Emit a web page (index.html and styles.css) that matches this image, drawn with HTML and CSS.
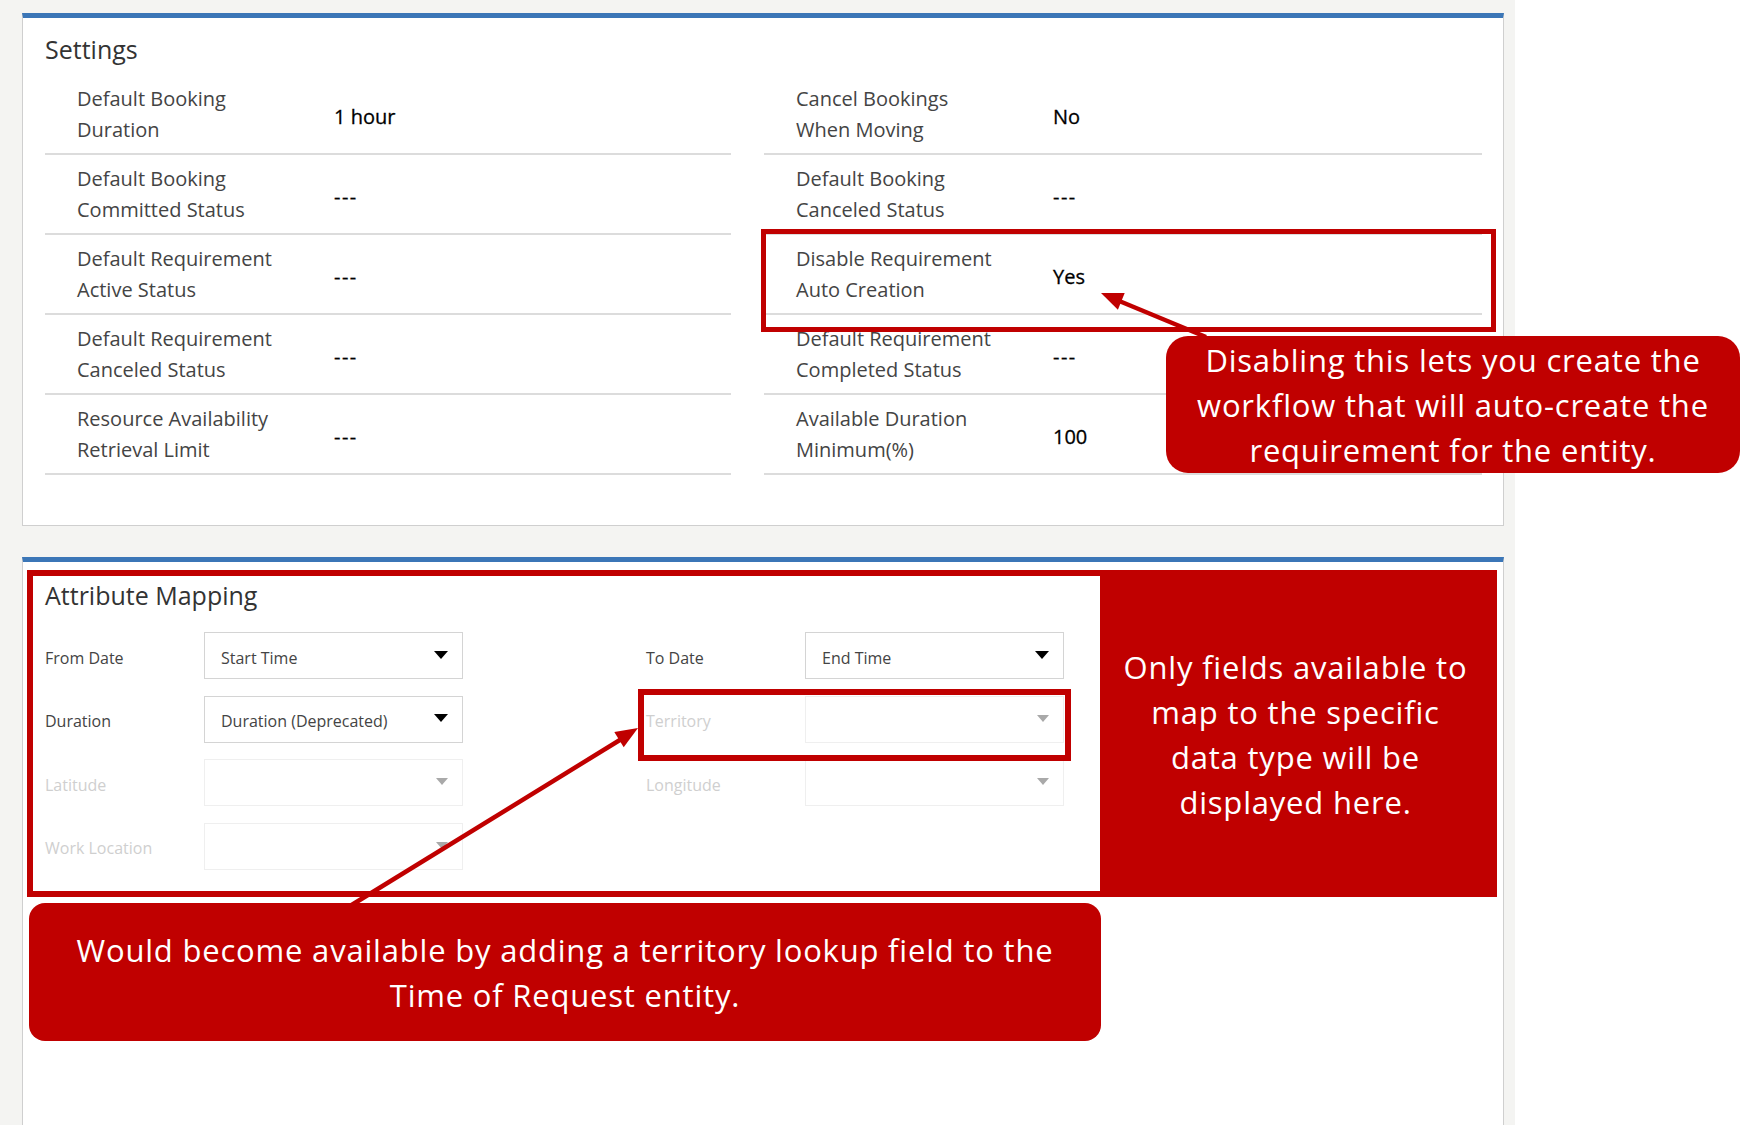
FILE: index.html
```html
<!DOCTYPE html>
<html lang="en">
<head>
<meta charset="utf-8">
<title>Settings</title>
<link rel="stylesheet" href="styles.css">
</head>
<body>
<div class="screen">
  <section class="panel panel-settings">
    <h2 class="panel-title">Settings</h2>
    <div class="settings-grid">
      <div class="settings-col">
        <div class="srow"><div class="slabel">Default Booking<br>Duration</div><div class="svalue">1 hour</div></div>
        <div class="srow"><div class="slabel">Default Booking<br>Committed Status</div><div class="svalue is-empty">---</div></div>
        <div class="srow"><div class="slabel">Default Requirement<br>Active Status</div><div class="svalue is-empty">---</div></div>
        <div class="srow"><div class="slabel">Default Requirement<br>Canceled Status</div><div class="svalue is-empty">---</div></div>
        <div class="srow"><div class="slabel">Resource Availability<br>Retrieval Limit</div><div class="svalue is-empty">---</div></div>
      </div>
      <div class="settings-col">
        <div class="srow"><div class="slabel">Cancel Bookings<br>When Moving</div><div class="svalue">No</div></div>
        <div class="srow"><div class="slabel">Default Booking<br>Canceled Status</div><div class="svalue is-empty">---</div></div>
        <div class="srow"><div class="slabel">Disable Requirement<br>Auto Creation</div><div class="svalue">Yes</div></div>
        <div class="srow"><div class="slabel">Default Requirement<br>Completed Status</div><div class="svalue is-empty">---</div></div>
        <div class="srow"><div class="slabel">Available Duration<br>Minimum(%)</div><div class="svalue">100</div></div>
      </div>
    </div>
  </section>

  <section class="panel panel-mapping">
    <h2 class="panel-title">Attribute Mapping</h2>
    <div class="map-grid">
      <span class="mlabel">From Date</span>
      <div class="select"><span class="select-text">Start Time</span><i class="caret"></i></div>
      <span class="spacer"></span>
      <span class="mlabel">To Date</span>
      <div class="select"><span class="select-text">End Time</span><i class="caret"></i></div>

      <span class="mlabel">Duration</span>
      <div class="select"><span class="select-text">Duration (Deprecated)</span><i class="caret"></i></div>
      <span class="spacer"></span>
      <span class="mlabel is-disabled">Territory</span>
      <div class="select is-disabled"><span class="select-text"></span><i class="caret"></i></div>

      <span class="mlabel is-disabled">Latitude</span>
      <div class="select is-disabled"><span class="select-text"></span><i class="caret"></i></div>
      <span class="spacer"></span>
      <span class="mlabel is-disabled">Longitude</span>
      <div class="select is-disabled"><span class="select-text"></span><i class="caret"></i></div>

      <span class="mlabel is-disabled">Work Location</span>
      <div class="select is-disabled"><span class="select-text"></span><i class="caret"></i></div>
    </div>
  </section>
</div>

<div class="annotations">
  <svg class="arrows" width="1740" height="1125" viewBox="0 0 1740 1125">
    <line x1="1112" y1="298" x2="1206" y2="337" stroke="#c00000" stroke-width="4.5"/>
    <polygon points="1101,293 1124.7,293.1 1117.9,309.7" fill="#c00000"/>
    <line x1="628" y1="735" x2="350" y2="906" stroke="#c00000" stroke-width="4.5"/>
    <polygon points="638,728 614.3,731.9 623.7,747.3" fill="#c00000"/>
  </svg>
  <div class="hl hl-disable"></div>
  <div class="hl hl-territory"></div>
  <div class="map-box">
    <div class="map-box-note">Only fields available to<br>map to the specific<br>data type will be<br>displayed here.</div>
  </div>
  <div class="callout callout-disable">Disabling this lets you create the<br>workflow that will auto-create the<br>requirement for the entity.</div>
  <div class="callout callout-territory">Would become available by adding a territory lookup field to the<br>Time of Request entity.</div>
</div>
</body>
</html>
```

FILE: styles.css
```css
* { box-sizing: border-box; }

html, body {
  margin: 0;
  padding: 0;
  background: #ffffff;
}

body {
  width: 1740px;
  height: 1125px;
  overflow: hidden;
  position: relative;
  font-family: "Open Sans", "Noto Sans", sans-serif;
}

.screen {
  width: 1515px;
  height: 1125px;
  overflow: hidden;
  background: #f4f4f2;
  padding: 13px 0 0 22px;
  display: flex;
  flex-direction: column;
  gap: 31px;
}

.panel {
  width: 1482px;
  background: #ffffff;
  border: 1px solid #cfcfcf;
  border-top: 5px solid #3b76b7;
  flex: none;
}

.panel-title {
  margin: 0;
  font-weight: 400;
  font-size: 25px;
  line-height: 34px;
  color: #333333;
  padding-left: 22px;
}

/* ---------- Settings ---------- */
.panel-settings {
  height: 513px;
}

.panel-settings .panel-title {
  padding-top: 14px;
  padding-bottom: 9px;
}

.settings-grid {
  display: grid;
  grid-template-columns: 686px 1fr;
  column-gap: 33px;
  padding: 0 21px 0 22px;
}

.srow {
  display: grid;
  grid-template-columns: 257px 1fr;
  align-items: center;
  height: 80px;
  padding-left: 32px;
  border-bottom: 2px solid #dcdcdc;
}

.slabel {
  font-size: 20px;
  line-height: 31px;
  color: #444444;
}

.svalue {
  font-size: 20px;
  line-height: 31px;
  color: #000000;
  font-weight: 500;
  padding-top: 4px;
  -webkit-text-stroke: 0.3px #000000;
}

.svalue.is-empty {
  letter-spacing: 1.5px;
}

/* ---------- Attribute mapping ---------- */
.panel-mapping {
  height: 570px;
}

.panel-mapping .panel-title {
  padding-top: 16px;
  padding-bottom: 20px;
}

.map-grid {
  display: grid;
  grid-template-columns: 159px 259px 183px 159px 259px;
  grid-auto-rows: 47px;
  row-gap: 16.5px;
  padding-left: 22px;
  align-items: center;
}

.mlabel {
  font-size: 16px;
  color: #444444;
  padding-top: 4px;
}

.mlabel.is-disabled { color: #cfcfcf; }

.select {
  height: 47px;
  border: 1px solid #d4d4d4;
  display: flex;
  align-items: center;
  justify-content: space-between;
  padding: 4px 14px 0 16px;
  font-size: 16px;
  color: #444444;
}

.select.is-disabled { border-color: #efefef; }

.caret {
  width: 0;
  height: 0;
  border-left: 7.5px solid transparent;
  border-right: 7.5px solid transparent;
  border-top: 8px solid #000000;
  margin-top: -6px;
}

.select.is-disabled .caret {
  border-left-width: 6.5px;
  border-right-width: 6.5px;
  border-top: 7px solid #a9a9a9;
}

/* ---------- Annotation overlay ---------- */
.annotations {
  position: absolute;
  top: 0;
  left: 0;
  width: 1740px;
  height: 1125px;
  pointer-events: none;
}

.arrows {
  position: absolute;
  top: 0;
  left: 0;
}

.hl {
  position: absolute;
  border: 6px solid #c00000;
}

.hl-disable {
  left: 761px;
  top: 229px;
  width: 735px;
  height: 103px;
  border-width: 5px;
}

.hl-territory {
  left: 638px;
  top: 689px;
  width: 433px;
  height: 72px;
}

.map-box {
  position: absolute;
  left: 27px;
  top: 570px;
  width: 1470px;
  height: 327px;
  border: 6px solid #c00000;
  display: flex;
  justify-content: flex-end;
}

.map-box-note {
  width: 391px;
  background: #c00000;
  color: #ffffff;
  display: flex;
  align-items: center;
  justify-content: center;
  text-align: center;
  font-size: 31px;
  line-height: 45px;
  letter-spacing: 0.8px;
  padding-top: 2px;
}

.callout {
  position: absolute;
  background: #c00000;
  color: #ffffff;
  display: flex;
  align-items: center;
  justify-content: center;
  text-align: center;
  font-size: 31px;
  line-height: 45px;
  letter-spacing: 0.8px;
  padding-top: 2px;
}

.callout-disable {
  left: 1166px;
  top: 336px;
  width: 574px;
  height: 137px;
  border-radius: 22px;
}

.callout-territory {
  left: 29px;
  top: 903px;
  width: 1072px;
  height: 138px;
  border-radius: 16px;
}
```
